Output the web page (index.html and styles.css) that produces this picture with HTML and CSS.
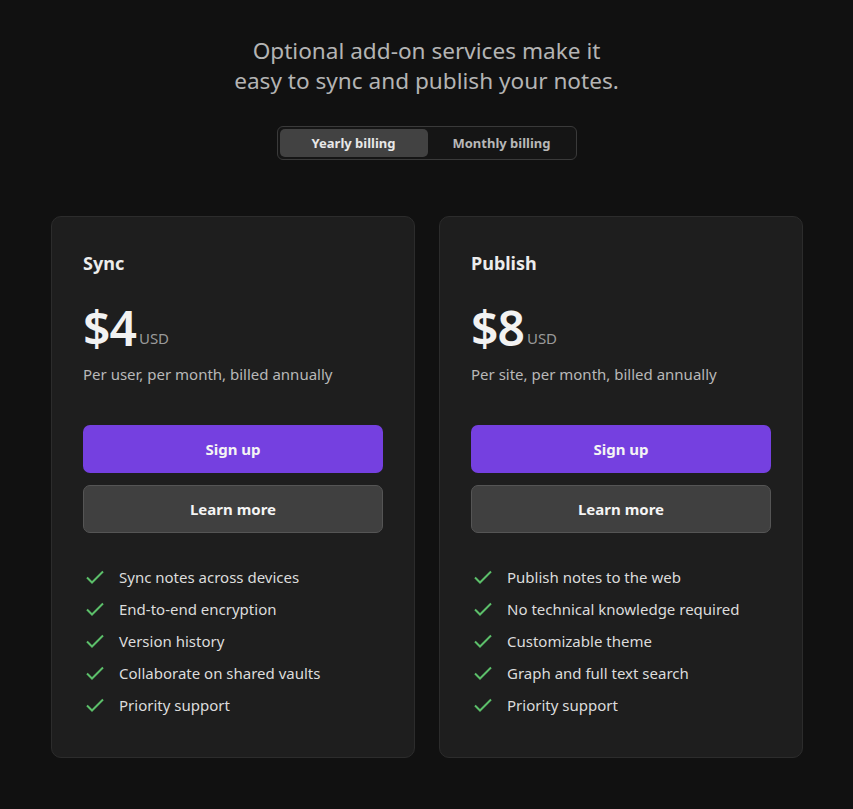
FILE: index.html
```html
<!DOCTYPE html>
<html>
<head>
<meta charset="utf-8">
<link rel="stylesheet" href="styles.css">
</head>
<body>
<main class="page">
  <h1 class="headline">Optional add-on services make it<br>easy to sync and publish your notes.</h1>
  <div class="toggle">
    <button class="toggle-btn active">Yearly billing</button>
    <button class="toggle-btn">Monthly billing</button>
  </div>
  <div class="cards">
    <section class="card">
      <h2 class="card-title">Sync</h2>
      <div class="price"><span class="amount">$4</span><span class="currency">USD</span></div>
      <p class="desc">Per user, per month, billed annually</p>
      <a class="btn btn-primary">Sign up</a>
      <a class="btn btn-secondary">Learn more</a>
      <ul class="features">
        <li><svg class="check" viewBox="0 0 20 20"><path d="M2 10.5l5 5L18 4.5"/></svg>Sync notes across devices</li>
        <li><svg class="check" viewBox="0 0 20 20"><path d="M2 10.5l5 5L18 4.5"/></svg>End-to-end encryption</li>
        <li><svg class="check" viewBox="0 0 20 20"><path d="M2 10.5l5 5L18 4.5"/></svg>Version history</li>
        <li><svg class="check" viewBox="0 0 20 20"><path d="M2 10.5l5 5L18 4.5"/></svg>Collaborate on shared vaults</li>
        <li><svg class="check" viewBox="0 0 20 20"><path d="M2 10.5l5 5L18 4.5"/></svg>Priority support</li>
      </ul>
    </section>
    <section class="card">
      <h2 class="card-title">Publish</h2>
      <div class="price"><span class="amount">$8</span><span class="currency">USD</span></div>
      <p class="desc">Per site, per month, billed annually</p>
      <a class="btn btn-primary">Sign up</a>
      <a class="btn btn-secondary">Learn more</a>
      <ul class="features">
        <li><svg class="check" viewBox="0 0 20 20"><path d="M2 10.5l5 5L18 4.5"/></svg>Publish notes to the web</li>
        <li><svg class="check" viewBox="0 0 20 20"><path d="M2 10.5l5 5L18 4.5"/></svg>No technical knowledge required</li>
        <li><svg class="check" viewBox="0 0 20 20"><path d="M2 10.5l5 5L18 4.5"/></svg>Customizable theme</li>
        <li><svg class="check" viewBox="0 0 20 20"><path d="M2 10.5l5 5L18 4.5"/></svg>Graph and full text search</li>
        <li><svg class="check" viewBox="0 0 20 20"><path d="M2 10.5l5 5L18 4.5"/></svg>Priority support</li>
      </ul>
    </section>
  </div>
</main>
</body>
</html>
```

FILE: styles.css
```css
* { box-sizing: border-box; }
html, body { margin: 0; padding: 0; }
body {
  background: #111111;
  font-family: "Noto Sans", "Open Sans", sans-serif;
  color: #dadada;
  width: 853px;
  height: 809px;
  overflow: hidden;
}
.page {
  display: flex;
  flex-direction: column;
  align-items: center;
  padding-top: 36px;
}
.headline {
  margin: 0;
  font-size: 22.6px;
  font-weight: 400;
  line-height: 30px;
  color: #b4b4b4;
  text-align: center;
}
.toggle {
  margin-top: 30px;
  display: flex;
  width: 300px;
  height: 34px;
  padding: 2px;
  border: 1px solid #3a3a3a;
  border-radius: 6px;
  background: #151515;
}
.toggle-btn {
  flex: 0 0 148px;
  border: none;
  background: transparent;
  color: #b8b8b8;
  font-family: inherit;
  font-size: 13px;
  font-weight: 700;
  border-radius: 5px;
  padding: 0;
}
.toggle-btn.active {
  background: #424242;
  color: #e8e8e8;
}
.cards {
  margin-top: 56px;
  margin-left: 1px;
  display: flex;
  gap: 24px;
}
.card {
  width: 364px;
  height: 542px;
  background: #1e1e1e;
  border: 1px solid #2c2c2c;
  border-radius: 10px;
  padding: 33px 31px 0 31px;
  display: flex;
  flex-direction: column;
}
.card-title {
  margin: 0;
  font-size: 18px;
  font-weight: 700;
  line-height: 26px;
  color: #ececec;
}
.price {
  margin-top: 22px;
  display: flex;
  align-items: baseline;
  height: 60px;
}
.amount {
  font-size: 48px;
  font-weight: 600;
  color: #f2f2f2;
  letter-spacing: -1px;
  line-height: 60px;
}
.currency {
  font-size: 15px;
  color: #9a9a9a;
  margin-left: 3px;
  position: relative;
  top: -2px;
}
.desc {
  margin: 5px 0 0;
  font-size: 15px;
  line-height: 22px;
  color: #b8b8b8;
}
.btn {
  display: flex;
  align-items: center;
  justify-content: center;
  height: 48px;
  border-radius: 7px;
  font-size: 15px;
  font-weight: 700;
  color: #f4f4f4;
}
.btn-primary {
  margin-top: 40px;
  background: #7540e0;
}
.btn-secondary {
  margin-top: 12px;
  background: #404040;
  border: 1px solid #555555;
}
.features {
  list-style: none;
  margin: 28px 0 0;
  padding: 0;
}
.features li {
  display: flex;
  align-items: center;
  height: 32px;
  font-size: 15px;
  color: #dcdcdc;
}
.check {
  width: 20px;
  height: 20px;
  margin: 0 14px 0 2px;
  fill: none;
  stroke: #5cbf6a;
  stroke-width: 2;
}
```
